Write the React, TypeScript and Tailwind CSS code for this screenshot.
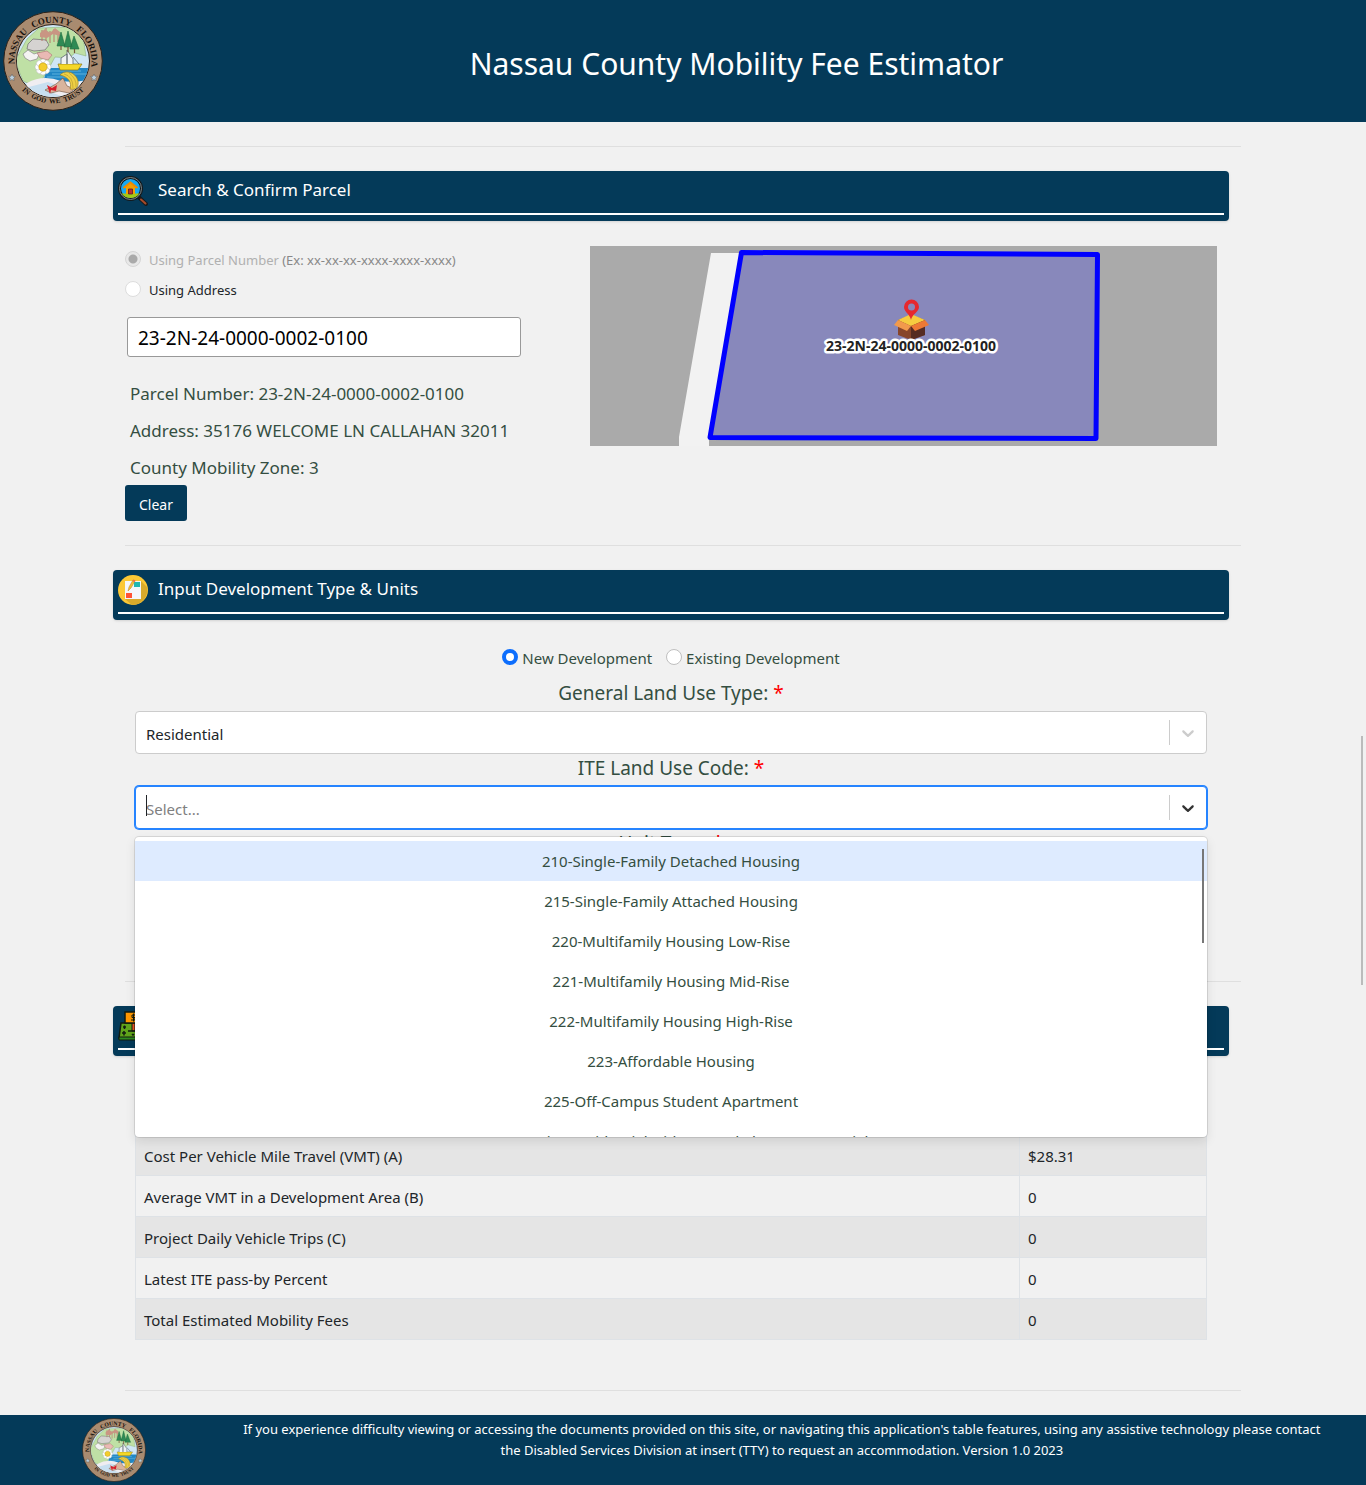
import { useId, useState, type ReactNode } from "react";

const landUseCodes = [
  "210-Single-Family Detached Housing",
  "215-Single-Family Attached Housing",
  "220-Multifamily Housing Low-Rise",
  "221-Multifamily Housing Mid-Rise",
  "222-Multifamily Housing High-Rise",
  "223-Affordable Housing",
  "225-Off-Campus Student Apartment",
  "230-Low-Rise Residential with Ground-Floor Commercial",
];

const feeRows = [
  ["Cost Per Vehicle Mile Travel (VMT) (A)", "$28.31"],
  ["Average VMT in a Development Area (B)", "0"],
  ["Project Daily Vehicle Trips (C)", "0"],
  ["Latest ITE pass-by Percent", "0"],
  ["Total Estimated Mobility Fees", "0"],
];

function Seal({ className }: { className: string }) {
  const id = useId();
  return (
    <svg viewBox="0 0 100 100" className={className} role="img" aria-label="Nassau County Florida seal">
      <defs>
        <path id={id + "t"} d="M14.500 65 A38.5 38.5 0 1 1 85.500 65" />
        <path id={id + "b"} d="M10 66 A43.5 43.5 0 0 0 90 66" />
        <clipPath id={id + "c"}>
          <circle cx="50" cy="50" r="36" />
        </clipPath>
      </defs>
      <circle cx="50" cy="50" r="49.3" fill="#a98b70" stroke="#2b2119" strokeWidth="1" />
      <circle cx="50" cy="50" r="36.5" fill="#cfe6f5" stroke="#2b2119" strokeWidth="1" />
      <g clipPath={`url(#${id}c)`}>
        <path d="M24 28 L36 17 L64 16 L80 26 L83 45 L72 42 L66 47 L52 46 L46 57 L40 67 L34 76 L20 70 L12 50Z" fill="#bfe0a5" stroke="#91b481" strokeWidth=".6" />
        <path d="M44 57 L88 57 L88 72 L40 72Z" fill="#2187c5" />
        <path d="M46 60h32M49 63h34M44 66h28" stroke="#6dbce3" strokeWidth=".8" />
        <path d="M24 72 Q40 63 58 70 Q72 72 84 69 L84 92 L20 92Z" fill="#f0edf1" />
        <path d="M22 77 L45 71 L61 76 L50 82 L66 88 L30 88Z" fill="#c8dff0" />
        <path d="M53 73 L60 67 L64 75 L72 78 L66 82 L56 80 L48 82 L42 79Z" fill="#d9b49d" stroke="#71503b" strokeWidth=".6" />
        <path d="M44 74 L49 77 L54 74 L53 80 L48 79 L47 83Z" fill="#d51e2b" />
        <path d="M57 64 C62 58 73 61 75 70 C76 77 72 79 67 78 C69 72 66 66 57 64Z" fill="#efcf44" stroke="#9c8424" strokeWidth=".7" />
        <path d="M61 63 Q70 65 70 77M66 62 Q74 68 73 76" fill="none" stroke="#b69a2f" strokeWidth=".6" />
        <path d="M55 53 L79 53 L75 59 L57 59Z" fill="#f5d727" stroke="#8c7615" strokeWidth=".7" />
        <path d="M58 53 V47 L64 43 V53M64 53 V39 L70 48 V53M70 46 L76 53" fill="#eef2f4" stroke="#58646b" strokeWidth=".8" />
        <path d="M25 33 L30 28 L43 29 L46 34 L42 39 L31 40 L24 38Z" fill="#d5d3d1" stroke="#777" strokeWidth=".8" />
        <path d="M20 43 L25 39 L31 43 L37 41 L34 48 L27 50 L22 47Z" fill="#f4f3f2" stroke="#888" strokeWidth=".7" />
        <path d="M34 42 L44 40 L49 44 L45 49 L37 47Z" fill="#e9b9b4" stroke="#aa7772" strokeWidth=".6" />
        <path d="M39 19 V30 M43 17 V30 M47 20 V32 M51 18 V31 M55 20 V31" stroke="#b7776b" strokeWidth="1" />
        <path d="M37 22 L42 18 L47 22 L52 17 L57 21 L57 25 L50 23 L44 27 L37 26Z" fill="#c99583" />
        <path d="M58 21 L54 35 H62Z M65 20 L61 36 H69Z M71 25 L67 38 H76Z" fill="#2f8a54" stroke="#226b40" strokeWidth=".6" />
        <path d="M58 35 V39M65 36V41M71.500 38V42" stroke="#765537" strokeWidth="1.200" />
        {[0, 45, 90, 135, 180, 225, 270, 315].map((a) => (
          <ellipse key={a} cx="40" cy="51" rx="3" ry="3" transform={`rotate(${a} 40 56)`} fill="#fff" stroke="#aaa" strokeWidth=".4" />
        ))}
        <circle cx="40" cy="56" r="4.200" fill="#f4cd2c" stroke="#ab8c13" strokeWidth=".5" />
      </g>
      <path d="M9 63 l1 2.200 2.400.3-1.700 1.700.4 2.500-2.100-1.200-2.100 1.200.4-2.500-1.700-1.700 2.400-.3zM91 63 l1 2.200 2.400.3-1.700 1.700.4 2.500-2.100-1.200-2.100 1.200.4-2.500-1.700-1.700 2.400-.3z" fill="#b9cfdf" stroke="#4d4a48" strokeWidth=".4" />
      <g fontFamily="Liberation Serif, serif" fontWeight="700" fill="#17120e" textAnchor="middle">
        <text fontSize="9">
          <textPath href={`#${id}t`} startOffset="20%">NASSAU</textPath>
        </text>
        <text fontSize="9">
          <textPath href={`#${id}t`} startOffset="49%">COUNTY</textPath>
        </text>
        <text fontSize="9">
          <textPath href={`#${id}t`} startOffset="80%">FLORIDA</textPath>
        </text>
        <text fontSize="7">
          <textPath href={`#${id}b`} startOffset="50%">{"IN\u00a0\u00a0GOD\u00a0\u00a0WE\u00a0\u00a0TRUST"}</textPath>
        </text>
      </g>
    </svg>
  );
}

function SearchIcon() {
  return (
    <svg viewBox="0 0 30 30" className="size-[30px] shrink-0" aria-hidden="true">
      <path d="M19.500 20 L28 28" stroke="#17191b" strokeWidth="4" strokeLinecap="round" />
      <path d="M23 23.500 L27.500 27.500" stroke="#a64b2a" strokeWidth="2" strokeLinecap="round" />
      <circle cx="12.500" cy="12.500" r="11" fill="#18a8f1" stroke="#15191b" strokeWidth="3" />
      <circle cx="12.500" cy="12.500" r="11" fill="none" stroke="#7b898d" strokeWidth="1" />
      <path d="M3.500 17.500 H21.500 Q18 22 12.500 22 Q7 22 3.500 17.500Z" fill="#a3c916" />
      <path d="M8 11 H17 V18 H8Z" fill="#f4a000" />
      <path d="M5.500 12 L12.500 6.500 L19.500 12" fill="#f4a000" stroke="#f08a00" strokeWidth="2" />
      <path d="M10.500 18 V13 H14.500 V18Z" fill="#b52d38" stroke="#5a1a22" strokeWidth=".8" />
    </svg>
  );
}

function PlanIcon() {
  return (
    <svg viewBox="0 0 30 30" className="size-[30px] shrink-0" aria-hidden="true">
      <circle cx="15" cy="15" r="15" fill="#fcc835" />
      <path d="M23 6 L29 12 A15 15 0 0 1 14 30 L7 24Z" fill="#d9aa2b" />
      <path d="M7 6 H23 V24 H7Z" fill="#f4f6fa" />
      <path d="M16 7 H22 V12 H16Z" fill="#22b7b1" />
      <path d="M8 18 H14 V23 H8Z" fill="#ff5335" />
      <path d="M10 16 L11 12 L15 5 L17 6 L13 13Z" fill="#f3bd36" stroke="#b88422" strokeWidth=".5" />
      <path d="M14.500 6 L15.500 4.500 L17.500 5.500 L16.700 7Z" fill="#ef6a52" />
    </svg>
  );
}

function MoneyIcon() {
  return (
    <svg viewBox="0 0 30 30" className="size-[30px] shrink-0" aria-hidden="true" stroke="#111b10">
      <path d="M3 12 H27 L29 27 H1Z" fill="#60a51b" strokeWidth="1.500" />
      <path d="M1 26 H29 V29 H1Z" fill="#2e8b20" />
      <path d="M14 12 H17 V20 H14Z" fill="#ed5420" />
      <path d="M7 1 H23 V12 H7Z" fill="#ff9800" strokeWidth="1.500" />
      <path d="M17 4 H14 V6.500 H17 V9 H13 M15.500 2.500 V10.500" fill="none" />
      <path d="M5 16H8M6.500 14.500V18M4 22H8M6 20V24.500M10 20H20M14 23L15 24L16 23M22 16H25M22 22H26" fill="none" strokeWidth="1.500" />
    </svg>
  );
}

function SectionHeader({ icon, children }: { icon: ReactNode; children: ReactNode }) {
  return (
    <div className="mr-3 -ml-3 h-[50px] rounded bg-[#043a59] p-[5px] shadow-sm">
      <div className="flex h-[39px] gap-2.5 border-b-2 border-white text-white">
        {icon}
        <h2 className="text-[17px] leading-7">{children}</h2>
      </div>
    </div>
  );
}

function Divider() {
  return <hr className="my-6 border-[#dfdfdf]" />;
}

function Chevron({ className }: { className: string }) {
  return (
    <span className="pointer-events-none absolute inset-y-0 right-px flex items-center">
      <span className="h-[25px] w-px bg-[#cccccc]" />
      <svg viewBox="0 0 20 20" className={`mx-2 size-5 fill-current ${className}`} aria-hidden="true">
        <path d="M4.516 7.548c0.436-0.446 1.043-0.481 1.576 0l3.908 3.747 3.908-3.747c0.533-0.481 1.141-0.446 1.574 0 0.436 0.445 0.408 1.197 0 1.615-0.406 0.418-4.695 4.502-4.695 4.502-0.217 0.223-0.502 0.335-0.787 0.335s-0.570-0.112-0.789-0.335c0 0-4.287-4.084-4.695-4.502s-0.436-1.170 0-1.615z" />
      </svg>
    </span>
  );
}

function FieldLabel({ htmlFor, children }: { htmlFor: string; children: ReactNode }) {
  return (
    <label htmlFor={htmlFor} className="block h-8 text-center text-[19px] leading-7">
      {children} <span className="text-[#ff0000]">*</span>
    </label>
  );
}

function ParcelMap() {
  return (
    <svg viewBox="0 0 627 200" preserveAspectRatio="xMidYMid slice" className="h-[200px] w-full" role="img" aria-label="Parcel map">
      <path d="M0 0H627V200H0Z" fill="#aaaaaa" />
      <path d="M121 7H152L121 191H119V200H89V191Z" fill="#f2f2f2" />
      <path d="M151.500 6.500L507.500 8.500L506 192.500L120 191.500Z" fill="#8888bb" stroke="#0000ff" strokeWidth="5" strokeLinejoin="round" />
      <path d="M308 74L321 69L335 74V89L321 94L308 89Z" fill="#87452b" />
      <path d="M321 79L335 74V89L321 94Z" fill="#552b22" />
      <path d="M308 74L321 68L335 74L321 80Z" fill="#f6cc40" />
      <path d="M308 74L321 80L317 85L304 79Z" fill="#f29a4c" />
      <path d="M335 74L339 79L325 85L321 80Z" fill="#ed7935" />
      <path d="M321 74C320 68 314 66 314 61A7.500 7.500 0 0 1 329 61C329 66 322 68 321 74Z" fill="#e6282e" />
      <circle cx="321.500" cy="61" r="3.500" fill="#8888bb" />
      <text x="321" y="105" textAnchor="middle" fontFamily="Noto Sans, sans-serif" fontWeight="700" fontSize="14" fill="#222" stroke="#fff" strokeWidth="5" strokeLinejoin="round" paintOrder="stroke">23-2N-24-0000-0002-0100</text>
    </svg>
  );
}

const radioBox =
  "mb-0.5 size-4 shrink-0 appearance-none rounded-full border border-[#bfbfbf] bg-white checked:border-4 checked:border-[#0d6efd]";

export default function App() {
  const [development, setDevelopment] = useState("new");
  return (
    <div className="bg-[#f1f1f1] font-['Noto_Sans',sans-serif] text-[15px] text-[#344e41]">
      <header className="flex h-[122px] items-center bg-[#043a59] text-white">
        <Seal className="ml-[3px] size-[100px] shrink-0" />
        <h1 className="flex-1 pt-1.5 pl-1 text-center text-[30px] leading-10">Nassau County Mobility Fee Estimator</h1>
      </header>

      <main className="mx-auto max-w-[1140px] px-3">
        <Divider />
        <SectionHeader icon={<SearchIcon />}>Search &amp; Confirm Parcel</SectionHeader>
        <section className="mt-[25px] mr-3 -ml-3 grid grid-cols-12">
          <div className="col-span-5 px-3">
            <div className="text-[13px] text-[#212529]">
              <label className="flex h-[30px] items-center gap-2 text-[#b0b0b0]">
                <input type="radio" name="lookup" disabled defaultChecked className="mb-1 size-4 appearance-none rounded-full border border-[#d5d5d5] bg-[#e8e8e8] bg-[radial-gradient(circle,#aaaaaa_4px,transparent_5px)]" />
                <span>
                  Using Parcel Number <span className="text-[#888888]">(Ex: xx-xx-xx-xxxx-xxxx-xxxx)</span>
                </span>
              </label>
              <label className="flex h-[30px] items-center gap-2">
                <input type="radio" name="lookup" className="mb-1 size-4 appearance-none rounded-full border border-[#dddddd] bg-white" />
                Using Address
              </label>
            </div>
            <input
              aria-label="Parcel number"
              defaultValue="23-2N-24-0000-0002-0100"
              className="mt-[11px] ml-0.5 block h-10 w-[394px] max-w-full rounded-[3px] border border-[#999999] bg-white px-2.5 pt-0.5 text-[19px] text-black"
            />
            <div className="mt-[18px] pl-[5px] text-[17px] leading-[37px] whitespace-nowrap">
              <p>Parcel Number: 23-2N-24-0000-0002-0100</p>
              <p>Address: 35176 WELCOME LN CALLAHAN 32011</p>
              <p>County Mobility Zone: 3</p>
            </div>
            <button className="-mt-px block h-9 min-w-[62px] rounded-[3px] bg-[#043a59] px-3 pt-0.5 text-[14px] text-white">Clear</button>
          </div>
          <div className="col-span-7 px-3">
            <ParcelMap />
          </div>
        </section>

        <Divider />
        <SectionHeader icon={<PlanIcon />}>Input Development Type &amp; Units</SectionHeader>
        <section className="mr-[34px] ml-2.5 pt-[23px] pb-[53px]">
          <div className="flex h-[30px] items-center justify-center gap-3.5">
            <label className="flex items-center gap-1">
              <input type="radio" name="development" className={radioBox} checked={development === "new"} onChange={() => setDevelopment("new")} />
              New Development
            </label>
            <label className="flex items-center gap-1">
              <input type="radio" name="development" className={radioBox} checked={development === "existing"} onChange={() => setDevelopment("existing")} />
              Existing Development
            </label>
          </div>
          <div className="pt-1.5">
            <FieldLabel htmlFor="land-use">General Land Use Type:</FieldLabel>
            <div className="relative">
              <select id="land-use" className="block h-[43px] w-full appearance-none rounded border border-[#cccccc] bg-white px-2.5 pt-1 text-[#212529]">
                <option>Residential</option>
              </select>
              <Chevron className="text-[#cccccc]" />
            </div>
          </div>
          <FieldLabel htmlFor="land-code">ITE Land Use Code:</FieldLabel>
          <div className="relative">
            <input
              id="land-code"
              role="combobox"
              aria-expanded="true"
              aria-controls="land-code-list"
              placeholder="Select..."
              className="block h-[43px] w-full rounded border border-[#2684ff] bg-white px-2.5 pt-0.5 ring-1 ring-[#2684ff] outline-none placeholder:text-[#808080]"
            />
            <span className="absolute top-[9px] left-[11px] h-[21px] w-px bg-[#212529]" />
            <Chevron className="text-[#333333]" />
            <div className="absolute inset-x-0 top-full z-10 mt-2 h-[300px] overflow-hidden rounded bg-white py-1 shadow-[0_0_0_1px_rgba(0,0,0,0.1),0_4px_11px_rgba(0,0,0,0.1)]">
              <ul id="land-code-list" role="listbox" className="text-center leading-6">
                {landUseCodes.map((code, i) => (
                  <li key={code} role="option" aria-selected={i === 0} className="h-10 py-2 aria-selected:bg-[#deebff]">
                    {code}
                  </li>
                ))}
              </ul>
              <span className="absolute top-3 right-[3px] h-[94px] w-0.5 bg-[#777777]" />
            </div>
          </div>
          <FieldLabel htmlFor="unit-type">Unit Type:</FieldLabel>
          <select id="unit-type" className="block h-[43px] w-full appearance-none rounded border border-[#cccccc] bg-white px-2.5" />
        </section>

        <Divider />
        <SectionHeader icon={<MoneyIcon />}>Estimated Mobility Fee</SectionHeader>
        <section className="mr-[34px] ml-2.5 pt-[78px] pb-[26px]">
          <table className="w-full table-fixed border-collapse text-[#212529]">
            <colgroup>
              <col />
              <col className="w-[187px]" />
            </colgroup>
            <tbody>
              {feeRows.map(([name, value]) => (
                <tr key={name} className="h-[41px] odd:bg-[#e5e5e5]">
                  <td className="border border-[#dee2e6] px-2 pt-0.5 leading-6">{name}</td>
                  <td className="border border-[#dee2e6] px-2 pt-0.5 leading-6">{value}</td>
                </tr>
              ))}
            </tbody>
          </table>
        </section>
        <Divider />
      </main>

      <footer className="flex h-[70px] bg-[#043a59] text-white">
        <div className="flex w-1/6 items-center justify-center">
          <Seal className="size-16" />
        </div>
        <p className="flex-1 pt-1 pr-[38px] pl-2 text-center text-[13px] leading-[21px]">
          If you experience difficulty viewing or accessing the documents provided on this site, or navigating this application's table features, using any assistive technology please contact the Disabled Services Division at insert (TTY) to request an accommodation. Version 1.0 2023
        </p>
      </footer>
      <div className="pointer-events-none fixed top-[736px] right-[3px] h-[249px] w-0.5 bg-[#bbbbbb]" />
    </div>
  );
}
